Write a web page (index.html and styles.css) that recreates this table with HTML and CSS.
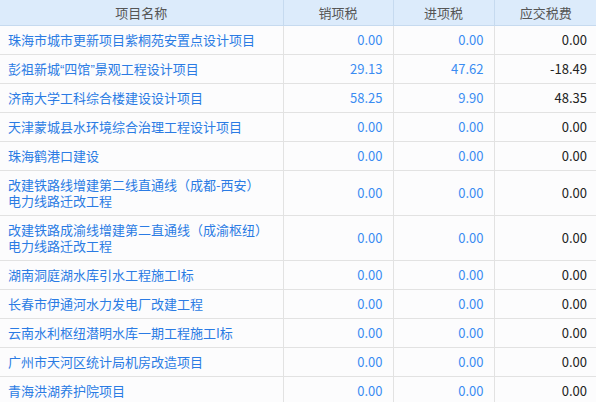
FILE: index.html
```html
<!DOCTYPE html>
<html lang="zh-CN">
<head>
<meta charset="utf-8">
<title>项目税费</title>
<link rel="stylesheet" href="styles.css">
</head>
<body>
<table class="grid">
  <colgroup>
    <col class="c-name">
    <col class="c-num">
    <col class="c-num2">
    <col class="c-num3">
  </colgroup>
  <thead>
    <tr>
      <th>项目名称</th>
      <th>销项税</th>
      <th>进项税</th>
      <th>应交税费</th>
    </tr>
  </thead>
  <tbody>
    <tr><td class="name">珠海市城市更新项目紫桐苑安置点设计项目</td><td class="num">0.00</td><td class="num">0.00</td><td class="due">0.00</td></tr>
    <tr><td class="name">彭祖新城<span class="q">“</span>四馆<span class="q">”</span>景观工程设计项目</td><td class="num">29.13</td><td class="num">47.62</td><td class="due">-18.49</td></tr>
    <tr><td class="name">济南大学工科综合楼建设设计项目</td><td class="num">58.25</td><td class="num">9.90</td><td class="due">48.35</td></tr>
    <tr><td class="name">天津蒙城县水环境综合治理工程设计项目</td><td class="num">0.00</td><td class="num">0.00</td><td class="due">0.00</td></tr>
    <tr><td class="name">珠海鹤港口建设</td><td class="num">0.00</td><td class="num">0.00</td><td class="due">0.00</td></tr>
    <tr class="tall"><td class="name">改建铁路线增建第二线直通线（成都-西安）<br>电力线路迁改工程</td><td class="num">0.00</td><td class="num">0.00</td><td class="due">0.00</td></tr>
    <tr class="tall"><td class="name">改建铁路成渝线增建第二直通线（成渝枢纽）<br>电力线路迁改工程</td><td class="num">0.00</td><td class="num">0.00</td><td class="due">0.00</td></tr>
    <tr><td class="name">湖南洞庭湖水库引水工程施工I标</td><td class="num">0.00</td><td class="num">0.00</td><td class="due">0.00</td></tr>
    <tr><td class="name">长春市伊通河水力发电厂改建工程</td><td class="num">0.00</td><td class="num">0.00</td><td class="due">0.00</td></tr>
    <tr><td class="name">云南水利枢纽潜明水库一期工程施工I标</td><td class="num">0.00</td><td class="num">0.00</td><td class="due">0.00</td></tr>
    <tr><td class="name">广州市天河区统计局机房改造项目</td><td class="num">0.00</td><td class="num">0.00</td><td class="due">0.00</td></tr>
    <tr><td class="name">青海洪湖养护院项目</td><td class="num">0.00</td><td class="num">0.00</td><td class="due">0.00</td></tr>
  </tbody>
</table>
</body>
</html>
```

FILE: styles.css
```css
html, body {
  margin: 0;
  padding: 0;
  background: #fcfcfd;
}
body {
  font-family: "Noto Sans CJK SC", "Noto Sans", sans-serif;
  font-size: 13px;
  overflow: hidden;
}
.grid {
  border-collapse: collapse;
  table-layout: fixed;
  width: 597px;
}
.c-name { width: 283px; }
.c-num { width: 110px; }
.c-num2 { width: 101px; }
.c-num3 { width: 103px; }
.grid th {
  height: 25px;
  padding: 0;
  background: #dcebfb;
  color: #555;
  font-weight: normal;
  text-align: center;
  border-left: 1px solid #c6daef;
  border-bottom: 1px solid #c6daef;
  line-height: 16px;
}
.grid th:first-child { border-left: none; }
.grid td {
  height: 28px;
  padding: 0 10px 0 8px;
  border-left: 1px solid #e2e2e2;
  border-bottom: 1px solid #e2e2e2;
  line-height: 16px;
  vertical-align: middle;
  white-space: nowrap;
}
.grid td:first-child { border-left: none; }
.grid tr.tall td { height: 44px; }
.q { font-family: "Liberation Sans", sans-serif; }
.name { color: #2a7be4; }
.num { color: #3a8cf2; text-align: right; }
.due { color: #222; text-align: right; }
```
